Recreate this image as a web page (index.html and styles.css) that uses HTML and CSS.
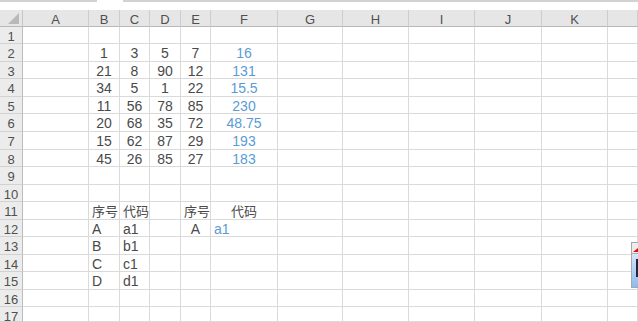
FILE: index.html
```html
<!DOCTYPE html>
<html lang="zh-CN">
<head>
    <meta charset="UTF-8">
    <meta name="viewport" content="width=device-width, initial-scale=1.0">
    <title>工作表</title>
    <link rel="stylesheet" href="styles.css">
</head>
<body>
    <div class="barra-superior">
        <div class="pestana pestana-1"></div>
        <div class="pestana pestana-2"></div>
    </div>

    <div class="hoja" id="hoja"></div>

    <div class="widget">
        <div class="widget-arriba"><span class="triangulo"></span></div>
        <div class="widget-abajo"><span class="barra"></span></div>
    </div>

    <script>
        const hoja = document.getElementById('hoja');
        // la última columna (L) queda cortada por el borde, sin letra visible
        const columnas = ['A', 'B', 'C', 'D', 'E', 'F', 'G', 'H', 'I', 'J', 'K', ''];
        const totalFilas = 17;

        // B2:F8
        const numeros = [
            [1, 3, 5, 7, 16],
            [21, 8, 90, 12, 131],
            [34, 5, 1, 22, 15.5],
            [11, 56, 78, 85, 230],
            [20, 68, 35, 72, 48.75],
            [15, 62, 87, 29, 193],
            [45, 26, 85, 27, 183]
        ];

        const textos = {
            B11: ['序号', 'izq cn'], C11: ['代码', 'izq cn'],
            E11: ['序号', 'izq cn'], F11: ['代码', 'centro cn'],
            B12: ['A', 'izq'], C12: ['a1', 'izq'],
            E12: ['A', 'centro'], F12: ['a1', 'izq azul'],
            B13: ['B', 'izq'], C13: ['b1', 'izq'],
            B14: ['C', 'izq'], C14: ['c1', 'izq'],
            B15: ['D', 'izq'], C15: ['d1', 'izq']
        };

        numeros.forEach((fila, i) => {
            fila.forEach((valor, j) => {
                const ref = columnas[j + 1] + (i + 2);
                textos[ref] = [String(valor), j === 4 ? 'centro azul' : 'centro'];
            });
        });

        function celda(clase, texto) {
            const div = document.createElement('div');
            div.className = clase;
            if (texto) div.textContent = texto;
            hoja.appendChild(div);
        }

        celda('esquina');
        columnas.forEach(col => celda('cab-col', col));

        for (let f = 1; f <= totalFilas; f++) {
            celda('cab-fila', String(f));
            columnas.forEach(col => {
                const dato = col ? textos[col + f] : null;
                if (dato) {
                    celda('celda ' + dato[1], dato[0]);
                } else {
                    celda('celda');
                }
            });
        }
    </script>
</body>
</html>
```

FILE: styles.css
```css
body {
    margin: 0;
    padding: 0;
    width: 638px;
    height: 322px;
    overflow: hidden;
    background-color: #fff;
    font-family: "Liberation Sans", "Noto Sans CJK SC", sans-serif;
    color: #4a4a4a;
    position: relative;
}

.barra-superior {
    height: 10px;
    display: flex;
    gap: 26px;
}

.pestana {
    height: 2px;
    background-color: #d2d2d2;
}

.pestana-1 {
    width: 97px;
}

.pestana-2 {
    flex: 1;
}

.hoja {
    display: grid;
    grid-template-columns: 23px 66px 31px 30px 31px 30px 67px 65px 66px 66px 67px 66px 30px;
    grid-template-rows: 17px 17px 18px 17px 18px 17px 18px 18px 17px 18px 17px 18px 17px 18px 17px 18px 17px 15px;
    height: 312px;
    overflow: hidden;
}

.hoja > div {
    box-sizing: border-box;
    overflow: hidden;
    white-space: nowrap;
}

.esquina {
    background-color: #e6e6e6;
    border-right: 1px solid #c6c6c6;
    border-bottom: 1px solid #b8b8b8;
    position: relative;
}

.esquina::after {
    content: "";
    position: absolute;
    right: 3px;
    bottom: 2px;
    width: 0;
    height: 0;
    border-left: 11px solid transparent;
    border-bottom: 11px solid #b9b9b9;
}

.cab-col {
    background-color: #e6e6e6;
    border-right: 1px solid #cdcdcd;
    border-bottom: 1px solid #b8b8b8;
    font-size: 13px;
    color: #505050;
    text-align: center;
    line-height: 19px;
}

.cab-fila {
    background-color: #ececec;
    border-right: 1px solid #bcbcbc;
    border-bottom: 1px solid #d2d2d2;
    font-size: 13px;
    color: #505050;
    text-align: center;
    line-height: 19px;
}

.celda {
    border-right: 1px solid #dadada;
    border-bottom: 1px solid #dadada;
    font-size: 14px;
    line-height: 19px;
}

.centro {
    text-align: center;
}

.izq {
    text-align: left;
    padding-left: 3px;
}

.cn {
    font-size: 13px;
}

.azul {
    color: #5b9bd5;
}

.widget {
    position: absolute;
    left: 631px;
    top: 242px;
    width: 7px;
    height: 46px;
    border: 1px solid #a8a8a8;
    border-right: none;
    box-sizing: border-box;
    display: flex;
    flex-direction: column;
}

.widget-arriba {
    height: 10px;
    background-color: #ececec;
    border-bottom: 1px solid #b0b0b0;
    position: relative;
}

.triangulo {
    position: absolute;
    left: 1px;
    bottom: 1px;
    width: 0;
    height: 0;
    border-left: 5px solid transparent;
    border-bottom: 4px solid #e01010;
}

.widget-abajo {
    flex: 1;
    background: linear-gradient(#d6e7fc, #8dbaf0);
    position: relative;
}

.barra {
    position: absolute;
    left: 4px;
    top: 5px;
    width: 2px;
    height: 18px;
    background-color: #1c2a3a;
}
```
